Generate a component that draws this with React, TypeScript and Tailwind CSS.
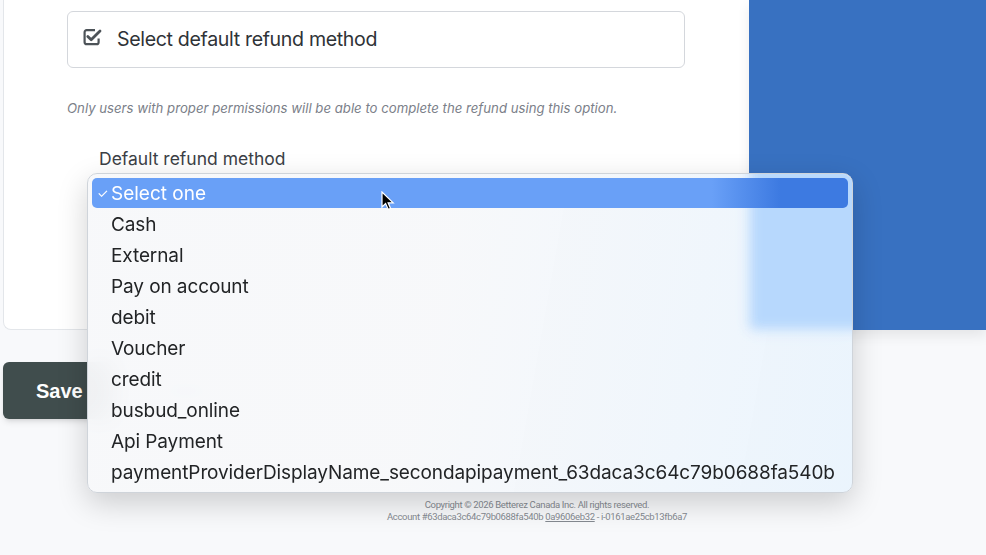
import React from "react";

const items = [
  "Cash",
  "External",
  "Pay on account",
  "debit",
  "Voucher",
  "credit",
  "busbud_online",
  "Api Payment",
  "paymentProviderDisplayName_secondapipayment_63daca3c64c79b0688fa540b",
];

export default function App() {
  return (
    <div className="relative w-[986px] h-[555px] overflow-hidden bg-[#f8f9fb] font-['Inter',sans-serif]">
      {/* top row: card + blue panel */}
      <div className="flex h-[330px]">
        <div className="ml-[3px] w-[746px] h-[330px] bg-white border-l border-b border-[#e3e6ea] rounded-bl-[8px] pl-[63px] pt-[11px]">
          <div className="w-[618px] h-[57px] border border-[#d4d7dc] rounded-[6px] flex items-center pl-[15px] gap-[15px]">
            <svg width="19" height="18" viewBox="0 0 19 18" className="-mt-[6px]">
              <path d="M12 2.2H3.6A2 2 0 0 0 1.6 4.2v10a2 2 0 0 0 2 2H13.6a2 2 0 0 0 2-2V10.5" stroke="#4d5358" strokeWidth="2.2" fill="none" />
              <path d="M4.8 8.4l3.4 3.4L17 3" stroke="#4d5358" strokeWidth="2.8" fill="none" strokeLinecap="round" strokeLinejoin="round" />
            </svg>
            <span className="text-[19.6px] text-[#2f3337] tracking-[-0.35px]">Select default refund method</span>
          </div>
          <p className="mt-[31px] text-[13.2px] italic text-[#7b8089] leading-[18px]">
            Only users with proper permissions will be able to complete the refund using this option.
          </p>
          <div className="ml-[32px] mt-[31px] text-[17.5px] text-[#3b4046] leading-[22px]">Default refund method</div>
          <div className="ml-[22px] mt-[10px] w-[302px] h-[58px] border border-[#d4d7dc] rounded-[6px]" />
        </div>
        <div className="flex-1 h-[330px] bg-[#3871c1] shadow-[0_6px_12px_rgba(0,0,0,0.08)]" />
      </div>

      {/* buttons */}
      <div className="mt-[32px] ml-[3px] flex items-center gap-[44px]">
        <button className="w-[110px] h-[57px] rounded-[6px] bg-[#404d4d] text-white font-bold text-[20px] font-['Liberation_Sans',sans-serif] text-left pl-[33px] shadow-md">
          Save
        </button>
        <span className="text-[18px] text-[#6b7280] font-['Liberation_Sans',sans-serif]">Cancel</span>
      </div>

      {/* footer */}
      <div className="mt-[80px] pl-[88px] flex flex-col items-center text-[9.5px] leading-[12px] text-[#858a91] font-['Roboto',sans-serif] tracking-[-0.35px]">
        <div>Copyright © 2026 Betterez Canada Inc. All rights reserved.</div>
        <div>
          Account #63daca3c64c79b0688fa540b <span className="underline">0a9606eb32</span> - i-0161ae25cb13fb6a7
        </div>
      </div>

      {/* native select popup */}
      <div className="absolute left-[87px] top-[173px] w-[766px] h-[320px] rounded-[10px] overflow-hidden border border-[#cfd4da] bg-[linear-gradient(100deg,rgba(247,248,250,0.96)_45%,rgba(234,244,253,0.97))] backdrop-blur-md shadow-[0_10px_30px_rgba(0,0,0,0.18)]">
        <div className="absolute left-[662px] -top-[10px] w-[140px] h-[165px] bg-[#b7d8fd] blur-[6px]" />
        <div className="relative px-[4px] pt-[4px] flex flex-col">
          <div className="h-[30px] mb-[1px] pt-[2px] rounded-[5px] bg-[linear-gradient(to_right,#69a0f7_82%,#3d7ae1_91%)] flex items-center text-white text-[19px]">
            <span className="w-[19px] text-[13px] pl-[5px]">✓</span>
            <span>Select one</span>
          </div>
          {items.map((it) => (
            <div key={it} className="h-[31px] pt-[2px] flex items-center pl-[19px] text-[19px] text-[#222426] tracking-[-0.1px]">
              {it}
            </div>
          ))}
        </div>
      </div>

      {/* cursor */}
      <svg className="absolute left-[381px] top-[191px]" width="14" height="20" viewBox="0 0 14 20">
        <path d="M1 1v15l3.6-3.4 2.6 5.8 2.4-1-2.5-5.6H12.2z" fill="#000" stroke="#fff" strokeWidth="1.2" />
      </svg>
    </div>
  );
}
